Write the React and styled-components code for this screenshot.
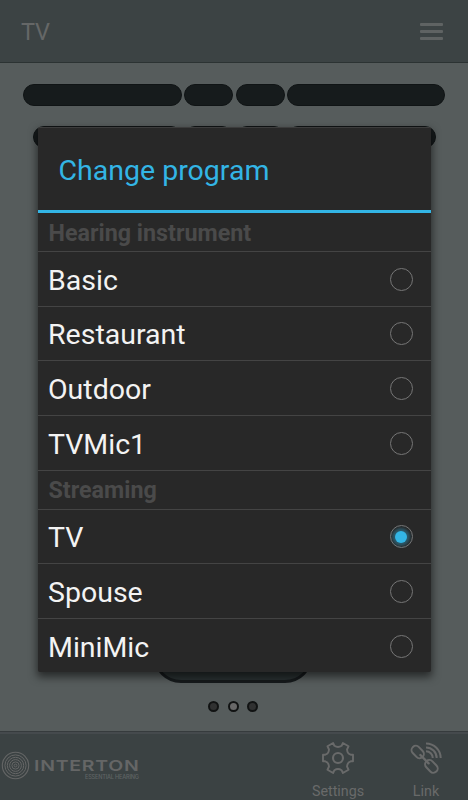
import { useState } from 'react';
import styled, { createGlobalStyle } from 'styled-components';

const hearingPrograms = ['Basic', 'Restaurant', 'Outdoor', 'TVMic1'];
const streamingPrograms = ['TV', 'Spouse', 'MiniMic'];

const Logo = () => (
  <svg width='142' height='34' viewBox='0 0 142 34' fill='none' stroke='#656666'>
    <circle cx='15.5' cy='17.5' r='13.2' strokeWidth='1.1' />
    <circle cx='15.5' cy='17.5' r='10.6' strokeWidth='1' />
    <circle cx='15.5' cy='17.5' r='8.2' strokeWidth='1' />
    <circle cx='15.5' cy='17.5' r='5.9' strokeWidth='1' />
    <circle cx='15.5' cy='17.5' r='3.6' strokeWidth='1' />
    <circle cx='15.5' cy='17.5' r='1.4' strokeWidth='1' />
    <LogoText
      x='26.2'
      y='23'
      fontSize='15'
      textLength='80.5'
      transform='scale(1.3 1)'
    >
      INTERTON
    </LogoText>
    <LogoText x='85' y='31' fontSize='5.6' textLength='54' $small>
      ESSENTIAL HEARING
    </LogoText>
  </svg>
);

const GearIcon = () => (
  <svg
    width='32'
    height='32'
    viewBox='0 0 32 32'
    fill='none'
    stroke='#696a6a'
    strokeWidth='1.9'
    strokeLinejoin='round'
  >
    <path d='M11.1 1 L12.4 3.8 Q16 6.2 19.6 3.8 L20.9 1 L26.5 4.3 L25 7.5 Q25.4 11.8 28.7 12.7 L31 12.8 V19.2 L28.7 19.3 Q25.4 20.2 25 24.5 L26.5 27.7 L20.9 31 L19.6 28.2 Q16 25.8 12.4 28.2 L11.1 31 L5.5 27.7 L7 24.5 Q6.6 20.2 3.3 19.3 L1 19.2 V12.8 L3.3 12.7 Q6.6 11.8 7 7.5 L5.5 4.3 Z' />
    <circle cx='16' cy='16' r='5' strokeWidth='2.1' />
  </svg>
);

const LinkIcon = () => (
  <svg
    width='32'
    height='32'
    viewBox='0 0 32 32'
    fill='none'
    stroke='#696a6a'
    strokeWidth='2'
    strokeLinecap='round'
  >
    <rect x='-6.9' y='-4.3' width='13.8' height='8.6' rx='4.2' transform='translate(7.7 10) rotate(46)' />
    <rect x='-7.1' y='-4.3' width='14.2' height='8.6' rx='4.2' transform='translate(21.4 24.4) rotate(46)' />
    <path d='M10.4 13 L18.6 21.3' strokeWidth='2.4' />
    <path
      d='M16 1.4 A14.7 14.7 0 0 1 30.7 16.1 M16 5.4 A10.7 10.7 0 0 1 26.7 16.1 M16 9.3 A6.8 6.8 0 0 1 22.8 16.1'
      strokeWidth='2'
      strokeLinecap='butt'
    />
  </svg>
);

const App = () => {
  const [selected, setSelected] = useState('TV');

  const renderProgram = (name) => (
    <Program key={name} onClick={() => setSelected(name)}>
      {name}
      <Radio>{selected === name && <RadioDot />}</Radio>
    </Program>
  );

  return (
    <Screen>
      <GlobalStyle />
      <Header>
        <HeaderTitle>TV</HeaderTitle>
        <Menu>
          <MenuLine />
          <MenuLine />
          <MenuLine />
        </Menu>
      </Header>
      <Main>
        <Bars $outer='158.5px'>
          <Bar />
          <Bar />
          <Bar />
          <Bar />
        </Bars>
        <Bars $outer='149px'>
          <Bar />
          <Bar />
          <Bar />
          <Bar />
        </Bars>
        <ProgramButton />
        <Dots>
          <Dot />
          <Dot $active />
          <Dot />
        </Dots>
      </Main>
      <Footer>
        <Logo />
        <Actions>
          <Action>
            <GearIcon />
            Settings
          </Action>
          <Action>
            <LinkIcon />
            Link
          </Action>
        </Actions>
      </Footer>
      <Overlay>
        <Dialog>
          <DialogTitle>Change program</DialogTitle>
          <Section>Hearing instrument</Section>
          {hearingPrograms.map(renderProgram)}
          <Section>Streaming</Section>
          {streamingPrograms.map(renderProgram)}
        </Dialog>
      </Overlay>
    </Screen>
  );
};

const GlobalStyle = createGlobalStyle`
  * {
    box-sizing: border-box;
  }

  body {
    margin: 0;
    font-family: Roboto, sans-serif;
  }
`;

const Screen = styled.div`
  position: relative;
  display: flex;
  flex-direction: column;
  width: 468px;
  height: 800px;
  overflow: hidden;
  background-color: #565c5c;
`;

const Header = styled.header`
  display: flex;
  align-items: center;
  justify-content: space-between;
  height: 63px;
  padding: 0 25px 0 21px;
  background-color: #3c4344;
  border-bottom: 1px solid #2c3333;
`;

const HeaderTitle = styled.h1`
  margin: 2px 0 0;
  font-size: 23.5px;
  font-weight: 400;
  letter-spacing: -0.3px;
  color: #656767;
`;

const Menu = styled.div`
  display: flex;
  flex-direction: column;
  gap: 4px;
  width: 23px;
`;

const MenuLine = styled.span`
  height: 3px;
  border-radius: 1px;
  background-color: #5f6363;
`;

const Main = styled.main`
  display: flex;
  flex: 1;
  flex-direction: column;
  align-items: center;
  padding-top: 21.4px;
`;

const Bars = styled.div`
  display: grid;
  grid-template-columns: ${({ $outer }) => `${$outer} 49px 49px ${$outer}`};
  gap: 2.3px;
  margin: 0 0 19.2px 0.8px;
`;

const Bar = styled.div`
  height: 22px;
  border: 1px solid #101415;
  border-radius: 11px;
  background-color: #161b1c;
`;

const ProgramButton = styled.div`
  width: 160px;
  height: 56px;
  margin: auto 2px 0 0;
  border: 3px solid #161a1c;
  border-radius: 28px;
  background-color: #293031;
`;

const Dots = styled.div`
  display: flex;
  gap: 8.5px;
  margin: 18px 1.6px 19px 0;
`;

const Dot = styled.span`
  width: 11px;
  height: 11px;
  border: 2px solid #111313;
  border-radius: 50%;
  background-color: ${({ $active }) => ($active ? '#686868' : '#303131')};
`;

const Footer = styled.footer`
  display: flex;
  justify-content: space-between;
  height: 69px;
  border-top: 1px solid #363b3d;
  background: linear-gradient(#454a4d 2px, #3b4243 2px);

  > svg {
    margin-top: 16px;
  }
`;

const LogoText = styled.text`
  font-family: Inter, sans-serif;
  font-weight: ${({ $small }) => ($small ? 500 : 600)};
  fill: ${({ $small }) => ($small ? '#606465' : '#656666')};
  stroke: none;
`;

const Actions = styled.div`
  display: flex;
`;

const Action = styled.div`
  display: flex;
  flex-direction: column;
  align-items: center;
  width: 88px;
  padding-top: 10px;
  gap: 9px;
  font-size: 14.3px;
  line-height: 17px;
  color: #696a6a;

  &:last-child {
    margin-right: -2px;
  }
`;

const Overlay = styled.div`
  position: absolute;
  inset: 0;
  display: flex;
  justify-content: center;
  align-items: flex-start;
  padding-top: 127px;
`;

const Dialog = styled.div`
  width: 393px;
  height: 545px;
  border-top: 1px solid #3c3c3c;
  border-radius: 2px;
  overflow: hidden;
  background-color: #282828;
  box-shadow: 0 4px 8px 1px rgba(0, 0, 0, 0.55);
`;

const DialogTitle = styled.h2`
  display: flex;
  align-items: center;
  height: 85px;
  margin: 0;
  padding: 2px 21px 0;
  font-size: 28.5px;
  font-weight: 400;
  color: #33b5e5;
  border-bottom: 3px solid #33b5e5;
`;

const Section = styled.h3`
  display: flex;
  align-items: center;
  height: 39px;
  margin: 0;
  padding: 1px 11px 0;
  font-size: 23.3px;
  font-weight: 700;
  color: #4a4a4a;
  border-bottom: 1px solid #444;
`;

const Program = styled.div`
  display: flex;
  align-items: center;
  justify-content: space-between;
  height: 54.65px;
  padding: 3px 18px 0 10.5px;
  font-size: 28.5px;
  color: #f3f3f3;
  border-bottom: 1px solid #444;
  cursor: pointer;

  &:last-child {
    border-bottom: none;
  }
`;

const Radio = styled.span`
  display: flex;
  align-items: center;
  justify-content: center;
  width: 23px;
  height: 23px;
  margin-bottom: 2.4px;
  border: 1px solid #767676;
  border-radius: 50%;
`;

const RadioDot = styled.span`
  width: 12px;
  height: 12px;
  border-radius: 50%;
  background-color: #33b5e5;
  box-shadow: 0 0 3px 3px rgba(51, 181, 229, 0.35);
`;

export default App;
